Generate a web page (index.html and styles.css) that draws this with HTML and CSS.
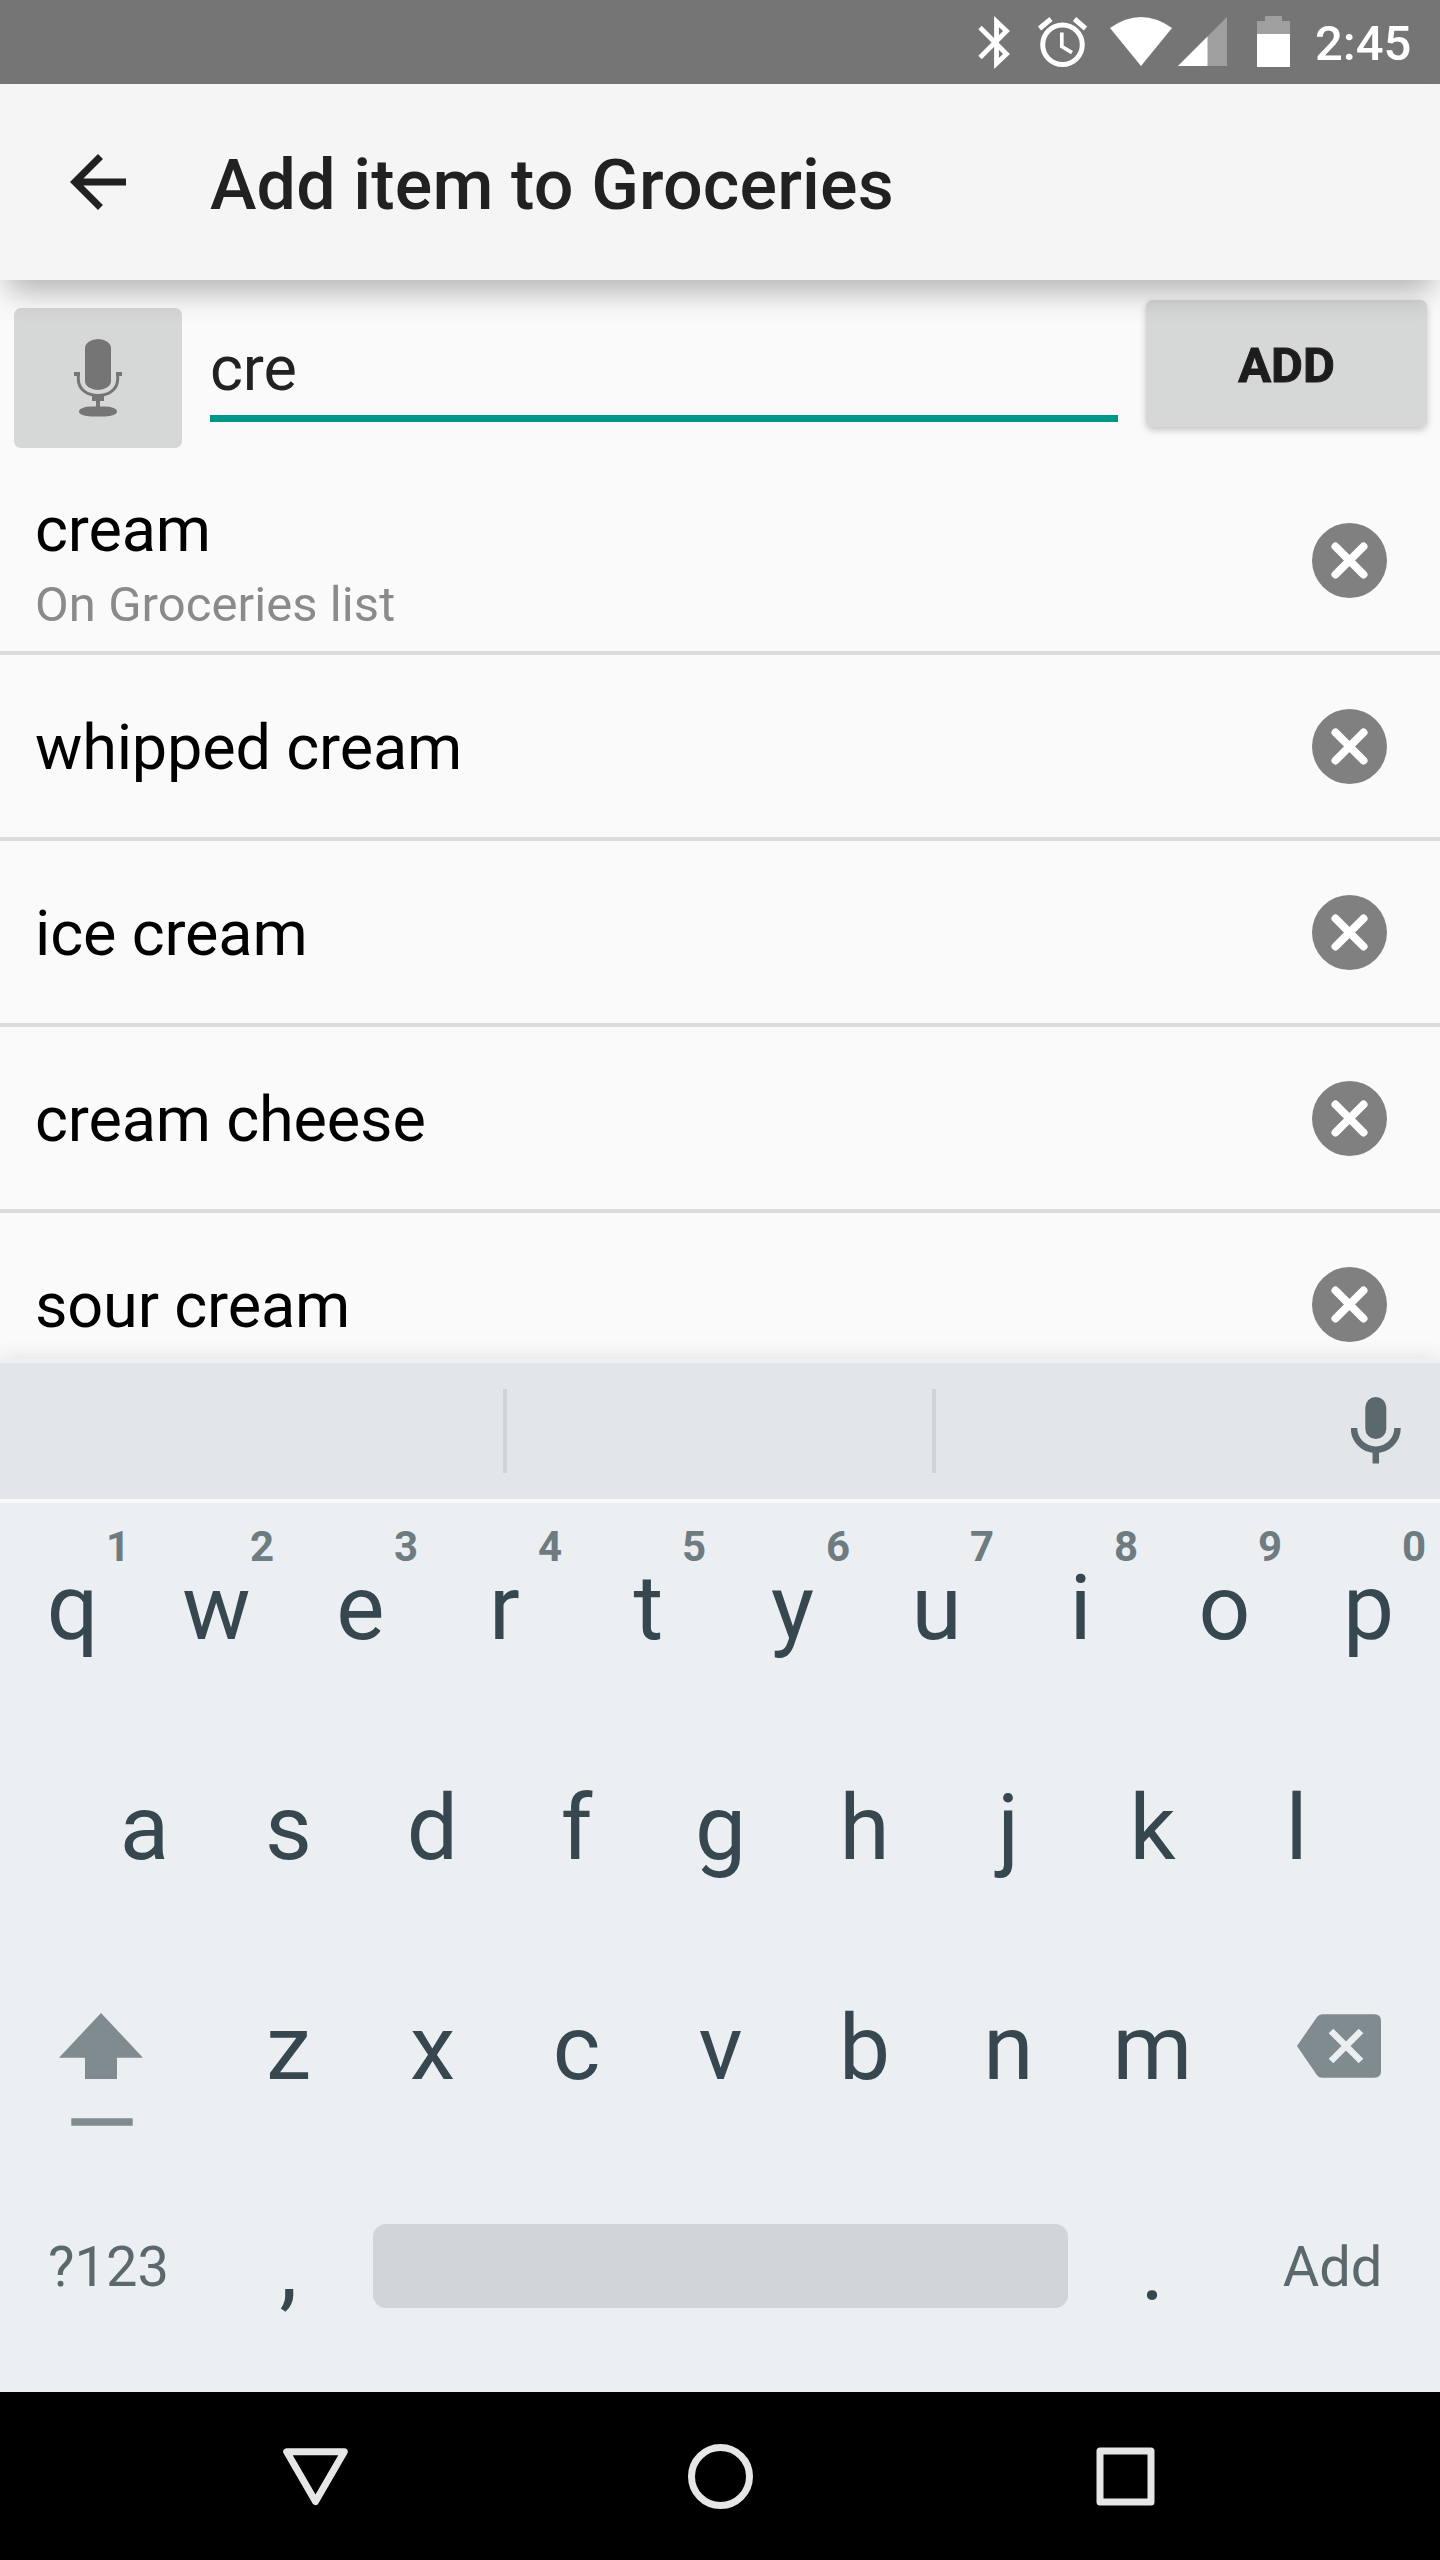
FILE: index.html
```html
<!DOCTYPE html>
<html lang="en">
<head>
<meta charset="utf-8">
<title>Add item to Groceries</title>
<link rel="stylesheet" href="styles.css">
</head>
<body>
<div class="screen">
  <div class="status">
    <svg class="status-icons" viewBox="960 0 340 84" width="340" height="84">
      <path d="M980 27.500L1006.500 54L996.500 63.500V21.500L1006.500 31L980 57.500" fill="none" stroke="#fff" stroke-width="4.800"/>
      <circle cx="1062.500" cy="44.700" r="19.800" fill="none" stroke="#fff" stroke-width="5"/>
      <path d="M1061.800 32.500V46.500L1072 52.700" fill="none" stroke="#fff" stroke-width="3.700"/>
      <path d="M1039.500 28.500L1051 19M1074.500 19L1085.500 28.500" fill="none" stroke="#fff" stroke-width="5"/>
      <path d="M1110 28Q1141 6 1172 28L1141 66Z" fill="#fff"/>
      <path d="M1178 66L1227 17V66Z" fill="#9f9f9f"/>
      <path d="M1178 66L1207.500 36.500V66Z" fill="#fff"/>
      <path d="M1265 16h17v5h8v13h-33V21h8z" fill="#9f9f9f"/>
      <path d="M1257 34h33v33h-33z" fill="#fff"/>
    </svg>
    <span class="clock">2:45</span>
  </div>
  <header class="appbar">
    <svg class="back" viewBox="0 0 24 24" width="84" height="84"><path d="M20 11H7.830l5.590-5.590L12 4l-8 8 8 8 1.410-1.410L7.830 13H20z" fill="#212121"/></svg>
    <h1 class="title">Add item to Groceries</h1>
  </header>
  <main class="content">
    <div class="entry">
      <div class="voice">
        <svg viewBox="0 0 48 80" width="48" height="80" fill="#757575">
          <rect x="11" y="1" width="26" height="51" rx="13" ry="9"/>
          <path d="M4.300 36V41C4.300 63 43.700 63 43.700 41V36" fill="none" stroke="#757575" stroke-width="3"/>
          <path d="M0 34h6v4H0zM42 34h6v4h-6zM18 57h12v6h-4v7h-4v-7h-4z"/>
          <rect x="5" y="68.500" width="38" height="10" rx="12" ry="5"/>
        </svg>
      </div>
      <div class="field">cre</div>
      <div class="add">ADD</div>
    </div>
    <ul class="list">
      <li class="row"><div class="double"><div class="name">cream</div><div class="note">On Groceries list</div></div><svg class="remove" viewBox="0 0 75 75" width="75" height="75"><circle cx="37.500" cy="37.500" r="37.500" fill="#808080"/><path d="M23.500 23.500L51.500 51.500M51.500 23.500L23.500 51.500" stroke="#fff" stroke-width="8" stroke-linecap="round"/></svg></li>
      <li class="row"><div class="name">whipped cream</div><svg class="remove" viewBox="0 0 75 75" width="75" height="75"><circle cx="37.500" cy="37.500" r="37.500" fill="#808080"/><path d="M23.500 23.500L51.500 51.500M51.500 23.500L23.500 51.500" stroke="#fff" stroke-width="8" stroke-linecap="round"/></svg></li>
      <li class="row"><div class="name">ice cream</div><svg class="remove" viewBox="0 0 75 75" width="75" height="75"><circle cx="37.500" cy="37.500" r="37.500" fill="#808080"/><path d="M23.500 23.500L51.500 51.500M51.500 23.500L23.500 51.500" stroke="#fff" stroke-width="8" stroke-linecap="round"/></svg></li>
      <li class="row"><div class="name">cream cheese</div><svg class="remove" viewBox="0 0 75 75" width="75" height="75"><circle cx="37.500" cy="37.500" r="37.500" fill="#808080"/><path d="M23.500 23.500L51.500 51.500M51.500 23.500L23.500 51.500" stroke="#fff" stroke-width="8" stroke-linecap="round"/></svg></li>
      <li class="row"><div class="name">sour cream</div><svg class="remove" viewBox="0 0 75 75" width="75" height="75"><circle cx="37.500" cy="37.500" r="37.500" fill="#808080"/><path d="M23.500 23.500L51.500 51.500M51.500 23.500L23.500 51.500" stroke="#fff" stroke-width="8" stroke-linecap="round"/></svg></li>
    </ul>
  </main>
  <section class="keyboard">
    <div class="strip">
      <span class="slot slot-first"></span><span class="slot"></span>
      <svg class="mic" viewBox="0 0 50 68" width="50" height="68"><rect x="14.300" y="0" width="21" height="42" rx="10.500" fill="#5b686e"/><path d="M3 31A21.700 21.700 0 0 0 46.500 31M24.800 53V66.500" fill="none" stroke="#5b686e" stroke-width="6.500"/></svg>
    </div>
    <div class="keys">
      <div class="line">
        <span class="key">q<b class="hint">1</b></span><span class="key">w<b class="hint">2</b></span><span class="key">e<b class="hint">3</b></span><span class="key">r<b class="hint">4</b></span><span class="key">t<b class="hint">5</b></span><span class="key">y<b class="hint">6</b></span><span class="key">u<b class="hint">7</b></span><span class="key">i<b class="hint">8</b></span><span class="key">o<b class="hint">9</b></span><span class="key">p<b class="hint">0</b></span>
      </div>
      <div class="line">
        <span class="key">a</span><span class="key">s</span><span class="key">d</span><span class="key">f</span><span class="key">g</span><span class="key">h</span><span class="key">j</span><span class="key">k</span><span class="key">l</span>
      </div>
      <div class="line">
        <span class="wide"><svg viewBox="0 0 216 220" width="216" height="220"><path d="M101 62L143 106.700H117V128H85V106.700H59ZM71.300 167.300h61.400v7.500H71.300z" fill="#808b90"/></svg></span>
        <span class="key">z</span><span class="key">x</span><span class="key">c</span><span class="key">v</span><span class="key">b</span><span class="key">n</span><span class="key">m</span>
        <span class="wide"><svg viewBox="0 0 216 220" width="216" height="220"><path d="M73 95L93 66Q95 63.300 98 63.300H150.500Q157 63.300 157 69.800V120.300Q157 126.800 150.500 126.800H98Q95 126.800 93 124.200Z" fill="#808b90"/><path d="M107 80L137 110M137 80L107 110" stroke="#ebeff2" stroke-width="6.500"/></svg></span>
      </div>
      <div class="line">
        <span class="wide label">?123</span><span class="key">,</span><span class="space"></span><span class="key">.</span><span class="wide label">Add</span>
      </div>
    </div>
  </section>
  <nav class="nav">
    <svg viewBox="0 0 1440 168" width="1440" height="168" fill="none" stroke="#e6e6e6" stroke-width="7" stroke-linejoin="round">
      <path d="M286.700 59.700H344.300L315.500 109.500Z"/>
      <circle cx="720.500" cy="84.500" r="29"/>
      <rect x="1100" y="59" width="51" height="51"/>
    </svg>
  </nav>
</div>
</body>
</html>
```
FILE: styles.css
```css
* { box-sizing: border-box; }
body { margin: 0; font-family: Roboto, "Noto Sans", sans-serif; }
svg { display: block; flex: none; }
.screen { width: 1440px; height: 2560px; display: flex; flex-direction: column; background: #fafafa; overflow: hidden; }
.status { height: 84px; flex: none; display: flex; justify-content: flex-end; align-items: center; padding-right: 28px; background: #757575; }
.clock { width: 112px; padding-left: 15px; white-space: nowrap; font-size: 49px; font-weight: 500; line-height: 58px; padding-top: 4px; color: #fff; }
.appbar { position: relative; z-index: 1; height: 196px; flex: none; display: flex; align-items: center; padding-left: 56px; gap: 70px; background: #f5f5f5; box-shadow: 0 20px 28px -8px rgba(0,0,0,.28); }
.title { margin: 6px 0 0; font-size: 70px; font-weight: 500; line-height: 82px; letter-spacing: .15px; color: #212121; }
.content { height: 1079px; flex: none; overflow: hidden; }
.entry { height: 189px; display: flex; align-items: flex-start; padding: 20px 13px 0 14px; }
.voice { width: 168px; height: 140px; margin-top: 8px; display: flex; align-items: center; justify-content: center; border-radius: 7px; background: #d6d7d7; }
.field { width: 908px; height: 122px; margin-left: 28px; padding-top: 32px; font-size: 63px; line-height: 74px; letter-spacing: -.15px; color: #212121; border-bottom: 7px solid #009688; }
.add { width: 281px; height: 127px; margin-left: 28px; text-align: center; font-size: 49px; font-weight: 700; line-height: 132px; color: #1d1d1d; -webkit-text-stroke: 1px #1d1d1d; border-radius: 7px; background: #d6d7d7; box-shadow: 0 3px 7px rgba(0,0,0,.22); }
.list { margin: 0; padding: 0; list-style: none; }
.row { height: 186px; display: flex; align-items: center; justify-content: space-between; padding: 0 53px 0 35px; border-bottom: 4px solid #dcdcdc; }
.name { font-size: 63px; line-height: 74px; letter-spacing: -.17px; color: #000; }
.row > .name { padding-top: 4px; }
.double { padding-top: 6px; }
.note { font-size: 49px; line-height: 58px; margin-top: 9px; letter-spacing: .07px; color: #8a8a8a; }
.keyboard { position: relative; z-index: 1; height: 1033px; flex: none; background: #ebeff2; box-shadow: 0 0 20px rgba(0,0,0,.12); }
.strip { height: 144px; display: flex; align-items: center; border-top: 4px solid #edf0f2; border-bottom: 4px solid #f6f8f9; background: #e2e6e9; }
.slot { width: 429px; height: 84px; border-right: 4px solid #cfd4d6; }
.slot-first { width: 507px; }
.mic { margin-left: 415px; }
.keys { padding-top: 8px; }
.line { height: 220px; display: flex; justify-content: center; }
.key { position: relative; width: 144px; padding-left: 1px; text-align: center; font-size: 91px; line-height: 194px; color: #37474f; }
.hint { position: absolute; top: 12px; right: 14px; font-size: 42px; font-weight: 700; line-height: 48px; color: #6e7b80; }
.wide { width: 216px; flex: none; }
.label { padding-left: 1px; text-align: center; font-size: 56px; line-height: 192px; color: #5b696e; }
.space { width: 695px; height: 84px; margin: 53px 12px 0 13px; border-radius: 13px; background: #d1d5d8; }
.nav { height: 168px; flex: none; background: #000; }
```
